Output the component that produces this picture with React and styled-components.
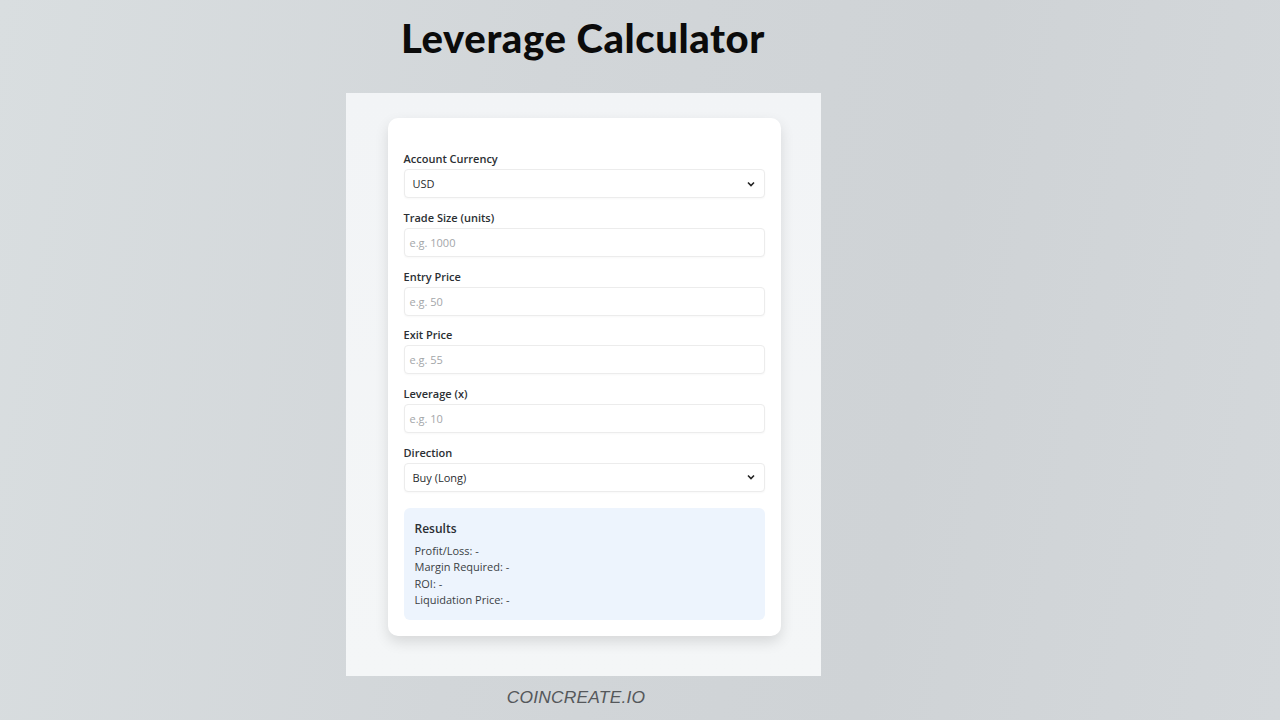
import React from 'react'
import styled, { createGlobalStyle } from 'styled-components'

const GlobalStyle = createGlobalStyle`
  html, body {
    margin: 0;
    padding: 0;
  }
  body {
    width: 1280px;
    height: 720px;
    overflow: hidden;
    background: linear-gradient(100deg, #d9dee0 0%, #d2d6d9 40%, #cfd3d6 70%, #d4d8db 100%);
    font-family: "Open Sans", "Noto Sans", sans-serif;
  }
`

const Page = styled.div`
  width: 1280px;
  height: 720px;
  display: flex;
  flex-direction: column;
  align-items: center;
`

const Title = styled.h1`
  margin: 14px 0 0 -114px;
  height: 79px;
  font-family: "Lato", "Open Sans", sans-serif;
  font-weight: 900;
  font-size: 40px;
  line-height: 48px;
  color: #0b0b0b;
  letter-spacing: 0.6px;
`

const Panel = styled.div`
  width: 475px;
  height: 583px;
  margin-left: -114px;
  background: linear-gradient(180deg, #f2f4f6 0%, #f4f6f7 100%);
  display: flex;
  justify-content: center;
  padding: 25px 0 0 2px;
  box-sizing: border-box;
`

const Card = styled.div`
  width: 393px;
  height: 518px;
  box-sizing: border-box;
  background: #ffffff;
  border-radius: 10px;
  box-shadow: 0 6px 14px rgba(0, 0, 0, 0.12);
  padding: 33px 16px 0 16px;
  display: flex;
  flex-direction: column;
`

const Field = styled.div`
  display: flex;
  flex-direction: column;
  margin-bottom: 11.8px;
`

const Label = styled.label`
  font-size: 11px;
  font-weight: 600;
  color: #2b2f33;
  line-height: 15px;
  margin-bottom: 3px;
`

const Box = styled.div`
  height: 29px;
  box-sizing: border-box;
  border: 1px solid #ececec;
  border-radius: 4px;
  background: #fff;
  display: flex;
  align-items: center;
  justify-content: space-between;
  padding: 0 ${({ $select }) => ($select ? '9px 0 8px' : '0 0 5px')};
  font-size: 11px;
  color: ${({ $placeholder }) => ($placeholder ? '#a3a6a9' : '#2a2d30')};
  box-shadow: 0 1px 2px rgba(0, 0, 0, 0.03);
`

const Chevron = () => (
  <svg width="8" height="6" viewBox="0 0 8 6">
    <path d="M1 1.5 L4 4.5 L7 1.5" fill="none" stroke="#222" strokeWidth="1.6" />
  </svg>
)

const Results = styled.div`
  margin-top: 4px;
  height: 112px;
  box-sizing: border-box;
  background: #edf4fd;
  border-radius: 6px;
  padding: 12px 11px;
  color: #3b3f44;
`

const ResultsTitle = styled.div`
  font-size: 12px;
  font-weight: 600;
  color: #2a2e33;
  line-height: 17px;
  margin-bottom: 6px;
`

const ResultRow = styled.div`
  font-size: 11px;
  line-height: 16.5px;
`

const Footer = styled.div`
  margin: 11px 0 0 -128px;
  font-family: "Liberation Sans", Arial, sans-serif;
  font-style: italic;
  font-size: 17.4px;
  color: #55585b;
  letter-spacing: 0.2px;
`

const fields = [
  { label: 'Account Currency', value: 'USD', select: true },
  { label: 'Trade Size (units)', value: 'e.g. 1000' },
  { label: 'Entry Price', value: 'e.g. 50' },
  { label: 'Exit Price', value: 'e.g. 55' },
  { label: 'Leverage (x)', value: 'e.g. 10' },
  { label: 'Direction', value: 'Buy (Long)', select: true },
]

const results = ['Profit/Loss: -', 'Margin Required: -', 'ROI: -', 'Liquidation Price: -']

export default function App() {
  return (
    <Page>
      <GlobalStyle />
      <Title>Leverage Calculator</Title>
      <Panel>
        <Card>
          {fields.map((f) => (
            <Field key={f.label}>
              <Label>{f.label}</Label>
              <Box $select={f.select} $placeholder={!f.select}>
                <span>{f.value}</span>
                {f.select && <Chevron />}
              </Box>
            </Field>
          ))}
          <Results>
            <ResultsTitle>Results</ResultsTitle>
            {results.map((r) => (
              <ResultRow key={r}>{r}</ResultRow>
            ))}
          </Results>
        </Card>
      </Panel>
      <Footer>COINCREATE.IO</Footer>
    </Page>
  )
}
